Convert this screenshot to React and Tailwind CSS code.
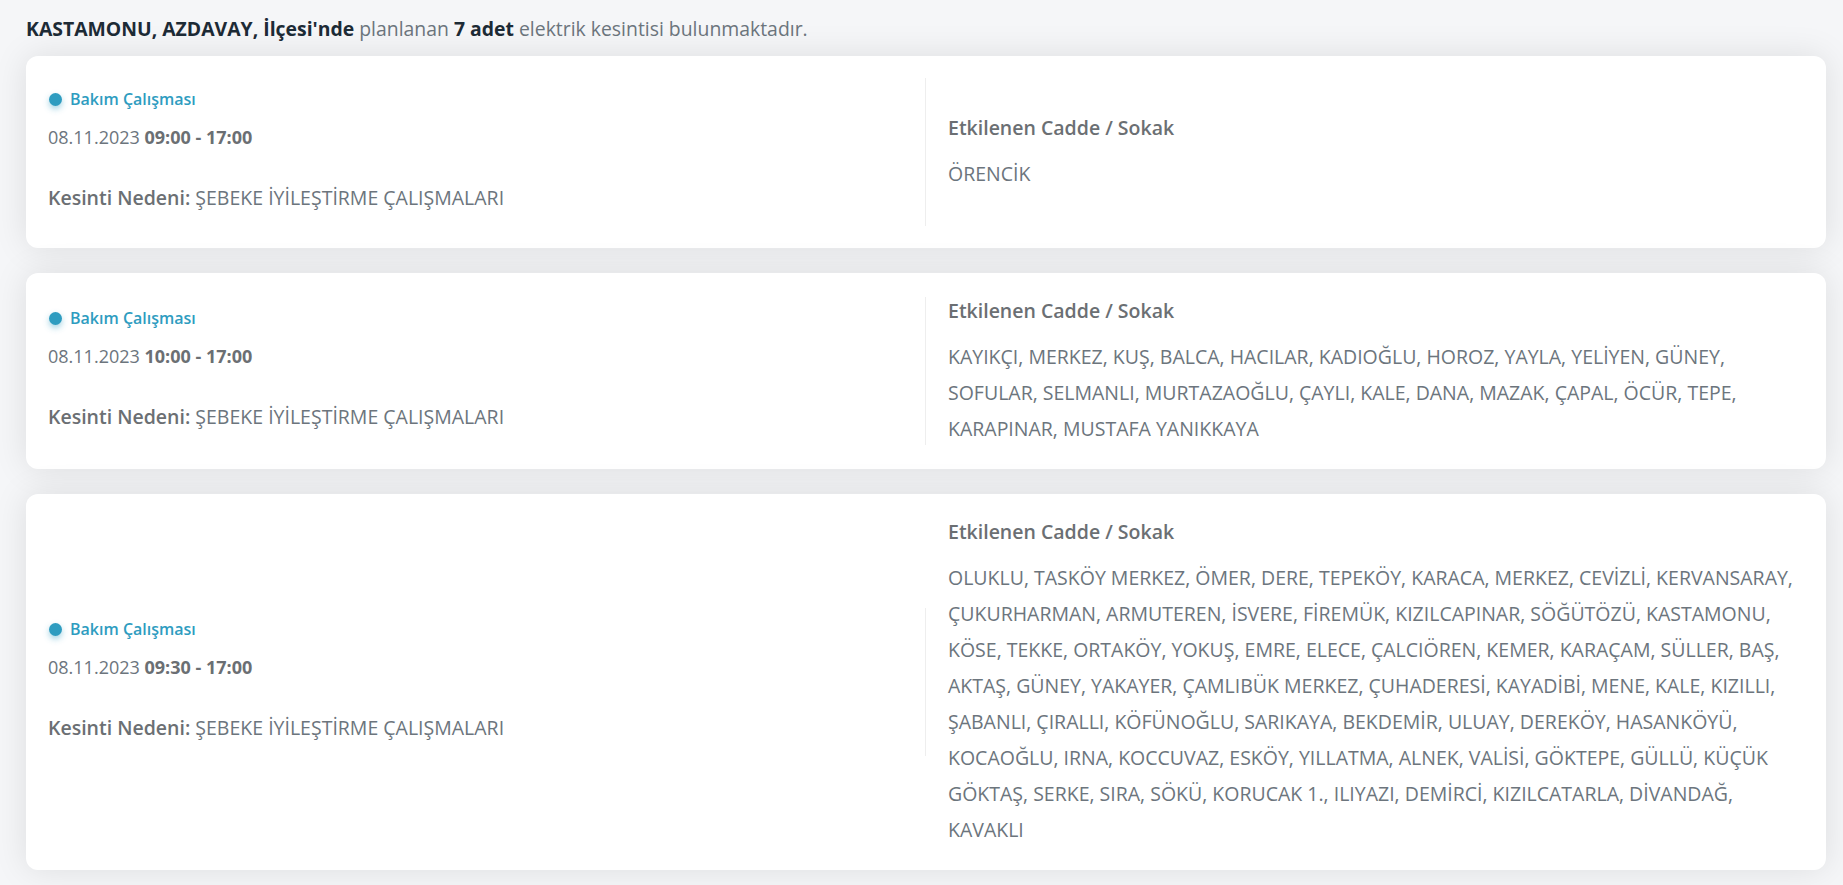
import React from 'react'

// street lists are kept as the lines the source page shows
const outages = [
  {
    date: '08.11.2023',
    time: '09:00 - 17:00',
    reason: 'ŞEBEKE İYİLEŞTİRME ÇALIŞMALARI',
    streets: ['ÖRENCİK'],
  },
  {
    date: '08.11.2023',
    time: '10:00 - 17:00',
    reason: 'ŞEBEKE İYİLEŞTİRME ÇALIŞMALARI',
    streets: [
      'KAYIKÇI, MERKEZ, KUŞ, BALCA, HACILAR, KADIOĞLU, HOROZ, YAYLA, YELİYEN, GÜNEY,',
      'SOFULAR, SELMANLI, MURTAZAOĞLU, ÇAYLI, KALE, DANA, MAZAK, ÇAPAL, ÖCÜR, TEPE,',
      'KARAPINAR, MUSTAFA YANIKKAYA',
    ],
  },
  {
    date: '08.11.2023',
    time: '09:30 - 17:00',
    reason: 'ŞEBEKE İYİLEŞTİRME ÇALIŞMALARI',
    streets: [
      'OLUKLU, TASKÖY MERKEZ, ÖMER, DERE, TEPEKÖY, KARACA, MERKEZ, CEVİZLİ, KERVANSARAY,',
      'ÇUKURHARMAN, ARMUTEREN, İSVERE, FİREMÜK, KIZILCAPINAR, SÖĞÜTÖZÜ, KASTAMONU,',
      'KÖSE, TEKKE, ORTAKÖY, YOKUŞ, EMRE, ELECE, ÇALCIÖREN, KEMER, KARAÇAM, SÜLLER, BAŞ,',
      'AKTAŞ, GÜNEY, YAKAYER, ÇAMLIBÜK MERKEZ, ÇUHADERESİ, KAYADİBİ, MENE, KALE, KIZILLI,',
      'ŞABANLI, ÇIRALLI, KÖFÜNOĞLU, SARIKAYA, BEKDEMİR, ULUAY, DEREKÖY, HASANKÖYÜ,',
      'KOCAOĞLU, IRNA, KOCCUVAZ, ESKÖY, YILLATMA, ALNEK, VALİSİ, GÖKTEPE, GÜLLÜ, KÜÇÜK',
      'GÖKTAŞ, SERKE, SIRA, SÖKÜ, KORUCAK 1., ILIYAZI, DEMİRCİ, KIZILCATARLA, DİVANDAĞ,',
      'KAVAKLI',
    ],
  },
]

function OutageCard({ item }) {
  return (
    <div className="bg-white rounded-xl shadow-[0_0_34px_rgba(0,0,0,0.1)] px-[22px] py-[22px] grid grid-cols-2 items-center">
      {/* left: type, time, reason */}
      <div className="h-[148px] border-r border-[#eeeeee] pt-[11px]">
        <div className="flex items-center h-[20px]">
          <span className="w-[13px] h-[13px] rounded-full bg-[#2e9cc0] shadow-[0_3px_6px_rgba(46,156,192,0.45)] mr-[8px] ml-[1px]" />
          <span className="text-[16px] font-semibold text-[#2e9cc0]">Bakım Çalışması</span>
        </div>
        <div className="mt-[13px] leading-[30px] text-[18px] text-[#6c757d]">
          {item.date} <span className="font-bold text-[#6b6f73]">{item.time}</span>
        </div>
        <div className="mt-[31px] leading-[30px] text-[19.5px] text-[#6c757d]">
          <span className="font-semibold text-[#6b6f73]">Kesinti Nedeni:</span> {item.reason}
        </div>
      </div>

      {/* right: affected streets */}
      <div className="pl-[22px]">
        <div className="leading-[32px] text-[19.5px] font-semibold text-[#6b6f73]">Etkilenen Cadde / Sokak</div>
        <div className="mt-[12px] leading-[36px] text-[19.5px] text-[#6c757d]">
          {item.streets.map((line, i) => (
            <div key={i} className="whitespace-nowrap">{line}</div>
          ))}
        </div>
      </div>
    </div>
  )
}

export default function App() {
  return (
    <div className="min-h-screen bg-[#f5f6f8] font-['Open_Sans',sans-serif] pl-[26px] pr-[17px] pt-[16px] pb-[20px]">
      <p className="text-[19.4px] leading-[26px] text-[#6c757d] mb-[14px]">
        <span className="font-bold text-[#1d2b36]">KASTAMONU, AZDAVAY, İlçesi'nde</span> planlanan{' '}
        <span className="font-bold text-[#1d2b36]">7 adet</span> elektrik kesintisi bulunmaktadır.
      </p>
      <div className="flex flex-col gap-[25px]">
        {outages.map((o, i) => (
          <OutageCard key={i} item={o} />
        ))}
      </div>
    </div>
  )
}
